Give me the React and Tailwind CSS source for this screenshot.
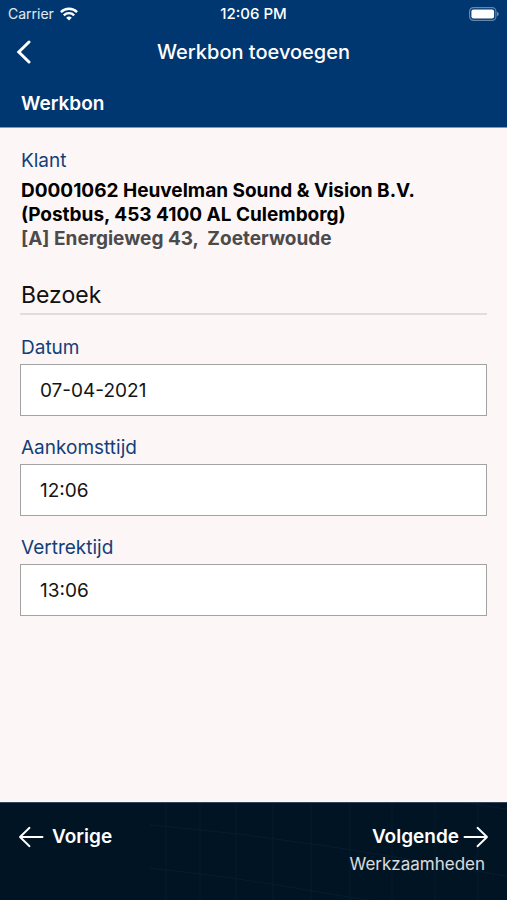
import { useState } from "react";

const initialVisit = [
  { id: "datum", label: "Datum", value: "07-04-2021" },
  { id: "aankomsttijd", label: "Aankomsttijd", value: "12:06" },
  { id: "vertrektijd", label: "Vertrektijd", value: "13:06" },
];

function StatusBar() {
  return (
    <div className="grid h-7 grid-cols-3 items-center px-2 text-sm">
      <div className="flex items-center gap-1.5 text-white/90">
        <span>Carrier</span>
        <svg viewBox="0 0 18 14" className="h-3.5 w-[18px]" fill="none" stroke="white" strokeWidth="2.4" aria-hidden="true">
          <path d="M0.9 5.1a11.6 11.6 0 0 1 16.2 0" />
          <path d="M3.8 8.3a7.4 7.4 0 0 1 10.4 0" />
          <path d="M9 13.6 6.2 10.8a4 4 0 0 1 5.6 0Z" fill="white" stroke="none" />
        </svg>
      </div>
      <span className="text-center text-[15px] font-medium">12:06 PM</span>
      <svg viewBox="0 0 30 14" className="h-3.5 w-[30px] justify-self-end" aria-hidden="true">
        <rect x="0.6" y="0.6" width="26.3" height="12.8" rx="3.8" fill="none" stroke="white" strokeOpacity="0.4" strokeWidth="1.2" />
        <rect x="2.4" y="2.4" width="22.7" height="9.2" rx="2" fill="white" />
        <path d="M28.2 4.8c1.9.8 1.9 3.6 0 4.4Z" fill="white" fillOpacity="0.5" />
      </svg>
    </div>
  );
}

function Field({ id, label, value, onChange }) {
  return (
    <div className="flex flex-col gap-1">
      <label htmlFor={id} className="pl-px text-[19px] leading-6 text-[#123f7a]">
        {label}
      </label>
      <input
        id={id}
        type="text"
        value={value}
        onChange={(event) => onChange(event.target.value)}
        className="h-13 w-full border border-[#a3a3a3] bg-white px-[19px] text-[19px] text-[#141414] outline-none focus:border-[#003770]"
      />
    </div>
  );
}

function FooterPattern() {
  return (
    <svg
      viewBox="0 0 507 98"
      preserveAspectRatio="none"
      className="pointer-events-none absolute inset-0 h-full w-full"
      fill="none"
      stroke="#0b2438"
      strokeOpacity="0.55"
      aria-hidden="true"
    >
      <path d="M166 0v98M200 0v98M236 0v98M273 0v98M311 0v98M350 0v98M392 0v98M435 0v98M478 0v98" />
      <path d="M150 22q90 8 180 22t177 30M150 66q80 8 170 24t120 20M470 0q18 4 37 6" />
    </svg>
  );
}

export default function App() {
  const [visit, setVisit] = useState(initialVisit);

  const updateField = (id, value) => {
    setVisit((fields) => fields.map((f) => (f.id === id ? { ...f, value } : f)));
  };

  return (
    <div className="flex min-h-screen flex-col bg-[#fdf6f6] font-[Inter,sans-serif]">
      <header className="border-b border-[#7f9bb8] bg-[#003770] text-white">
        <StatusBar />
        <div className="grid h-12 grid-cols-[48px_1fr_48px] items-center">
          <button type="button" aria-label="Terug" className="flex h-full items-center pl-4">
            <svg viewBox="0 0 16 24" className="h-6 w-4" fill="none" stroke="white" strokeWidth="3" strokeLinecap="round" strokeLinejoin="miter" aria-hidden="true">
              <path d="M13 2 2.8 12 13 22" />
            </svg>
          </button>
          <h1 className="text-center text-xl font-medium">Werkbon toevoegen</h1>
        </div>
        <h2 className="px-[21px] pb-[11px] pt-4 text-[19px] font-semibold leading-6">Werkbon</h2>
      </header>

      <main className="flex-1 px-5 pt-[21px] text-[19px] leading-6">
        <section className="pl-px">
          <h3 className="text-[#123f7a]">Klant</h3>
          <p className="mt-1.5 font-bold text-black">
            D0001062 Heuvelman Sound &amp; Vision B.V.
            <br />
            (Postbus, 453 4100 AL Culemborg)
          </p>
          <p className="whitespace-pre-wrap font-bold text-[#4c4a4b]">{"[A] Energieweg 43,  Zoeterwoude"}</p>
        </section>

        <h3 className="mt-7 border-b-2 border-[#e2dddd] pb-0.5 pl-px text-[23px] leading-8 text-[#111]">Bezoek</h3>

        <form className="mt-[21px] flex flex-col gap-5 pb-5" onSubmit={(event) => event.preventDefault()}>
          {visit.map((field) => (
            <Field key={field.id} {...field} onChange={(value) => updateField(field.id, value)} />
          ))}
        </form>
      </main>

      <footer className="relative h-[98px] border-t border-[#33475b] bg-[#011423] text-white">
        <FooterPattern />
        <nav className="relative flex items-start justify-between px-[18px] pt-[22px] text-[19px] font-semibold leading-6">
          <button type="button" className="flex items-center gap-2">
            <svg viewBox="0 0 26 22" className="h-[22px] w-[26px]" fill="none" stroke="white" strokeWidth="1.9" strokeLinecap="round" strokeLinejoin="round" aria-hidden="true">
              <path d="M24.5 11H2M11.5 1.8 2 11l9.5 9.2" />
            </svg>
            Vorige
          </button>
          <button type="button" className="flex flex-col items-end gap-[3px]">
            <span className="flex items-center gap-1">
              Volgende
              <svg viewBox="0 0 26 22" className="h-[22px] w-[26px]" fill="none" stroke="white" strokeWidth="1.9" strokeLinecap="round" strokeLinejoin="round" aria-hidden="true">
                <path d="M1.5 11H24M14.5 1.8 24 11l-9.5 9.2" />
              </svg>
            </span>
            <span className="pr-1 text-[17px] font-normal text-white/85">Werkzaamheden</span>
          </button>
        </nav>
      </footer>
    </div>
  );
}
